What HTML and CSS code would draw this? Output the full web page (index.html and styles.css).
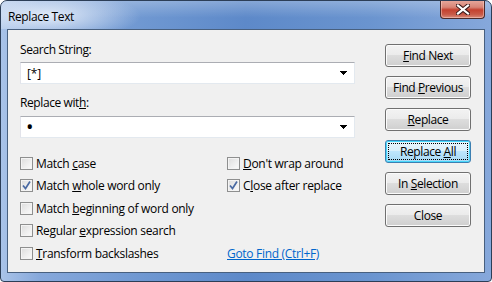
FILE: index.html
```html
<!DOCTYPE html>
<html>
<head>
<meta charset="utf-8">
<link rel="stylesheet" href="styles.css">
</head>
<body>
<div class="window">
  <div class="titlebar">
    <span class="title">Replace Text</span>
    <div class="close-btn">
      <svg width="14" height="11" viewBox="0 0 14 11">
        <path d="M2 1.5 L12 9.5 M12 1.5 L2 9.5" stroke="#3b1a1a" stroke-width="4.2" stroke-linecap="square"/>
        <path d="M2 1.5 L12 9.5 M12 1.5 L2 9.5" stroke="#ffffff" stroke-width="2.2" stroke-linecap="square"/>
      </svg>
    </div>
  </div>
  <div class="client">
    <div class="main">
      <div class="label">Search Strin<u>g</u>:</div>
      <div class="combo">
        <span class="value">[*]</span>
        <svg class="arrow" width="7" height="4" viewBox="0 0 7 4"><path d="M0 0H7V1H6V2H5V3H4V4H3V3H2V2H1V1H0Z" fill="#000"/></svg>
      </div>
      <div class="label label2">Replace wit<u>h</u>:</div>
      <div class="combo">
        <span class="value bullet">•</span>
        <svg class="arrow" width="7" height="4" viewBox="0 0 7 4"><path d="M0 0H7V1H6V2H5V3H4V4H3V3H2V2H1V1H0Z" fill="#000"/></svg>
      </div>
      <div class="options">
        <div class="opt"><span class="cb"></span><span>Match <u>c</u>ase</span></div>
        <div class="opt"><span class="cb"></span><span><u>D</u>on't wrap around</span></div>
        <div class="opt"><span class="cb checked"><svg width="9" height="9" viewBox="0 0 9 9"><path d="M1 4.5 L3.5 7.5 L8 0.5" fill="none" stroke="#4a6aa3" stroke-width="1.7"/></svg></span><span>Match <u>w</u>hole word only</span></div>
        <div class="opt"><span class="cb checked"><svg width="9" height="9" viewBox="0 0 9 9"><path d="M1 4.5 L3.5 7.5 L8 0.5" fill="none" stroke="#4a6aa3" stroke-width="1.7"/></svg></span><span>C<u>l</u>ose after replace</span></div>
        <div class="opt"><span class="cb"></span><span>Match <u>b</u>eginning of word only</span></div>
        <div class="opt"></div>
        <div class="opt"><span class="cb"></span><span>Regular <u>e</u>xpression search</span></div>
        <div class="opt"></div>
        <div class="opt"><span class="cb"></span><span><u>T</u>ransform backslashes</span></div>
        <div class="opt"><a class="link" href="#">Goto Find (Ctrl+F)</a></div>
      </div>
    </div>
    <div class="buttons">
      <div class="btn"><span><u>F</u>ind Next</span></div>
      <div class="btn"><span>Find <u>P</u>revious</span></div>
      <div class="btn"><span><u>R</u>eplace</span></div>
      <div class="btn default"><span class="focus"><span>Replace <u>A</u>ll</span></span></div>
      <div class="btn"><span>In <u>S</u>election</span></div>
      <div class="btn"><span>Close</span></div>
    </div>
  </div>
</div>
</body>
</html>
```

FILE: styles.css
```css
html, body {
  margin: 0;
  padding: 0;
  background: #ffffff;
}
body {
  font-family: "Open Sans", "Noto Sans", sans-serif;
  font-size: 12px;
  color: #000;
}
.window {
  width: 492px;
  height: 282px;
  box-sizing: border-box;
  border: 1px solid #2c3e57;
  border-radius: 7px 7px 4px 4px;
  background: linear-gradient(to right, #a9c3e8 0%, #86a8db 8%, #6e97d1 30%, #5d89c9 50%, #6a94cf 75%, #86a8db 100%);
  display: flex;
  flex-direction: column;
  overflow: hidden;
  position: relative;
}
.titlebar {
  height: 28px;
  display: flex;
  align-items: center;
  padding-left: 7px;
  background:
    radial-gradient(ellipse 95px 24px at 45px 15px, rgba(238,244,252,0.9), rgba(238,244,252,0) 100%),
    linear-gradient(to bottom, rgba(255,255,255,0.25), rgba(255,255,255,0) 60%);
}
.title {
  font-size: 12px;
  letter-spacing: -0.4px;
  color: #000;
  margin-top: 2px;
}
.close-btn {
  position: absolute;
  top: -1px;
  right: 6px;
  width: 45px;
  height: 19px;
  box-sizing: border-box;
  border: 1px solid #4b2a2a;
  border-top: none;
  border-radius: 0 0 4px 4px;
  background: linear-gradient(to bottom, #e8aa9e 0%, #d88577 40%, #c4412f 55%, #c85a48 80%, #d88a7a 100%);
  display: flex;
  align-items: center;
  justify-content: center;
  box-shadow: inset 0 0 0 1px rgba(255,220,210,0.45);
}
.client {
  flex: 1;
  margin: 0 6px 8px 6px;
  border: 1px solid #48607f;
  background: #f0f0f0;
  display: flex;
  padding: 12px 12px 0 12px;
}
.main {
  width: 335px;
}
.label {
  height: 15px;
  line-height: 15px;
  letter-spacing: -0.4px;
  margin-bottom: 5px;
}
.label2 {
  margin-top: 11px;
  margin-bottom: 6px;
}
.combo {
  height: 22px;
  box-sizing: border-box;
  background: #fff;
  border: 1px solid #e3e9ef;
  border-top-color: #abadb3;
  border-left-color: #e2e3ea;
  display: flex;
  align-items: center;
  padding: 0 4px 0 6px;
}
.combo .value {
  flex: 1;
  letter-spacing: -0.2px;
}
.combo .bullet {
  font-size: 20px;
  line-height: 20px;
  margin-left: -1px;
}
.arrow {
  margin-right: 3px;
}
.options {
  margin-top: 14px;
  display: grid;
  grid-template-columns: 207px 1fr;
  grid-auto-rows: 22.5px;
}
.opt {
  display: flex;
  align-items: center;
  letter-spacing: -0.3px;
  white-space: nowrap;
}
.cb {
  width: 13px;
  height: 13px;
  box-sizing: border-box;
  border: 1px solid #8e8f8f;
  background: linear-gradient(135deg, #dcdcdc 0%, #f0f0f0 60%, #fbfbfb 100%);
  box-shadow: inset 0 0 0 1px #f4f4f4;
  margin-right: 3px;
  display: flex;
  align-items: center;
  justify-content: center;
  flex: none;
}
.link {
  color: #0066cc;
  text-decoration: underline;
  letter-spacing: -0.3px;
}
.buttons {
  margin-left: 30px;
  padding-top: 2px;
  display: flex;
  flex-direction: column;
  gap: 9px;
}
.btn {
  width: 86px;
  height: 23px;
  box-sizing: border-box;
  border: 1px solid #707070;
  border-radius: 3px;
  background: linear-gradient(to bottom, #f3f3f3 0%, #ebebeb 49%, #dddddd 50%, #cfcfcf 100%);
  box-shadow: inset 0 0 0 1px #fbfbfb;
  display: flex;
  align-items: center;
  justify-content: center;
  letter-spacing: -0.4px;
  padding-bottom: 1px;
  white-space: nowrap;
}
.btn.default {
  border-color: #3c7fb1;
  background: linear-gradient(to bottom, #eaf6fd 0%, #d9f0fc 49%, #bee6fd 50%, #a7d9f5 100%);
  box-shadow: inset 0 0 0 1px #48d8fb;
  padding: 2px;
}
.btn .focus {
  flex: 1;
  align-self: stretch;
  border: 1px dotted #000;
  display: flex;
  align-items: center;
  justify-content: center;
}
```
